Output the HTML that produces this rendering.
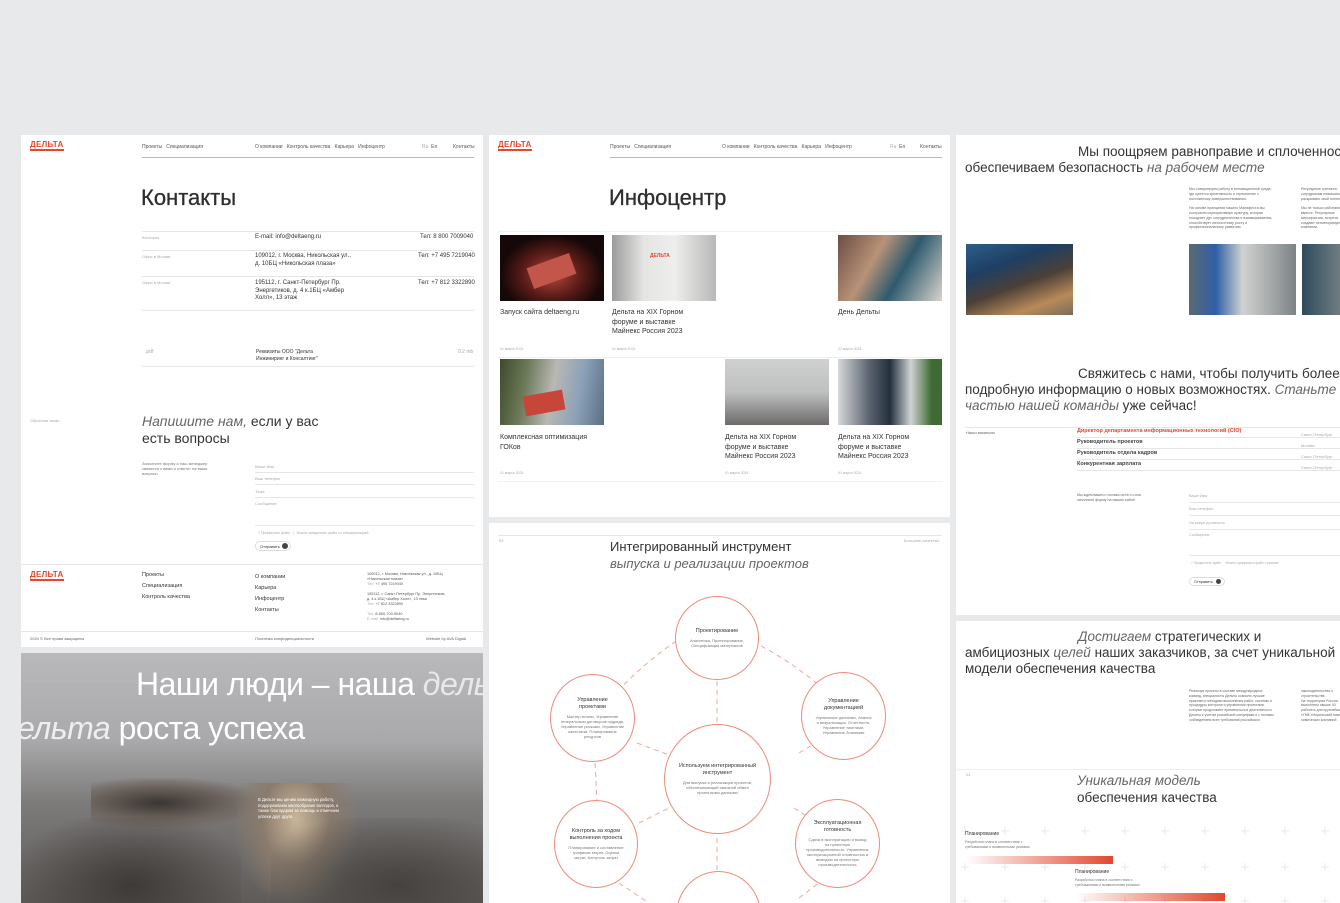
<!DOCTYPE html>
<html><head><meta charset="utf-8">
<style>
*{margin:0;padding:0;box-sizing:border-box}
html,body{width:1340px;height:903px;overflow:hidden}
body{background:#e8e9eb;position:relative;font-family:"Liberation Sans","Noto Sans CJK SC",sans-serif;color:#333}
.p{position:absolute;background:#fff;overflow:hidden}
.a{position:absolute;white-space:nowrap}
.t5{font-size:5px;color:#555}
.g{color:#aaa}
.ln{position:absolute;height:1px;background:#e6e6e6}
.logo{position:absolute;color:#e2472f;font-size:8px;font-weight:bold;letter-spacing:.3px;border-bottom:2px solid #e2472f;line-height:8px}
i{font-style:italic;font-weight:normal;color:#666}
.img{position:absolute}
.circ{position:absolute;border:1px solid #ee8a7b;border-radius:50%;background:#fff;text-align:center;display:flex;flex-direction:column;justify-content:center;align-items:center;padding:6px}
.circ b{font-size:5.5px;font-weight:normal;color:#333;line-height:7px}
.circ span{font-size:4px;color:#777;line-height:5px;margin-top:3px}
</style></head><body>

<!-- LEFT TOP: Контакты -->
<div class="p" style="left:21px;top:135px;width:462px;height:512px">
 <div class="logo" style="left:9px;top:6px">ДЕЛЬТА</div>
 <div class="a t5" style="left:121px;top:9px">Проекты&nbsp;&nbsp; Специализация</div>
 <div class="a t5" style="left:234px;top:9px">О компании&nbsp;&nbsp; Контроль качества&nbsp;&nbsp; Карьера&nbsp;&nbsp; Инфоцентр</div>
 <div class="a t5" style="left:401px;top:9px"><span class="g">Ru</span>&nbsp; En</div>
 <div class="a t5" style="left:432px;top:9px">Контакты</div>
 <div class="ln" style="left:121px;top:22px;width:332px;background:#bbb"></div>
 <div class="a" style="left:120px;top:50px;font-size:22px;color:#2e2e2e;-webkit-text-stroke:0.3px #2e2e2e">Контакты</div>
 <div class="ln" style="left:121px;top:96px;width:332px"></div>
 <div class="a t5 g" style="left:121px;top:100px;font-size:4px">Контакты</div>
 <div class="a" style="left:234px;top:99px;font-size:6px">E-mail: info@deltaeng.ru</div>
 <div class="a" style="left:399px;top:99px;font-size:6px">Тел: 8 800 7009040</div>
 <div class="ln" style="left:121px;top:115px;width:332px"></div>
 <div class="a g" style="left:121px;top:119px;font-size:4px">Офис в Москве</div>
 <div class="a" style="left:234px;top:118px;font-size:6px;line-height:7.5px">109012, г. Москва, Никольская ул.,<br>д. 10БЦ «Никольская плаза»</div>
 <div class="a" style="left:397px;top:118px;font-size:6px">Тел: +7 495 7219040</div>
 <div class="ln" style="left:121px;top:141px;width:332px"></div>
 <div class="a g" style="left:121px;top:145px;font-size:4px">Офис в Москве</div>
 <div class="a" style="left:234px;top:145px;font-size:6px;line-height:7.5px">195112, г. Санкт-Петербург Пр.<br>Энергетиков, д. 4 к.1БЦ «Амбер<br>Холл», 13 этаж</div>
 <div class="a" style="left:397px;top:145px;font-size:6px">Тел: +7 812 3322890</div>
 <div class="ln" style="left:121px;top:175px;width:332px"></div>
 <div class="a g" style="left:124px;top:214px;font-size:5px">.pdf</div>
 <div class="a" style="left:235px;top:214px;font-size:5px;line-height:7px">Реквизиты ООО "Дельта<br>Инжиниринг и Консалтинг"</div>
 <div class="a g" style="left:437px;top:214px;font-size:5px">0.2 mb</div>
 <div class="ln" style="left:121px;top:231px;width:332px"></div>
 <div class="a g" style="left:9px;top:283px;font-size:4px">Обратная связь</div>
 <div class="a" style="left:121px;top:278px;font-size:14px;line-height:17px;color:#333"><i>Напишите нам,</i> если у вас<br>есть вопросы</div>
 <div class="a" style="left:121px;top:326px;font-size:4px;line-height:5px;color:#777">Заполните форму и наш менеджер<br>свяжется с вами и ответит на ваши<br>вопросы</div>
 <div class="a g" style="left:234px;top:329px;font-size:4px">Ваше Имя</div>
 <div class="ln" style="left:234px;top:337px;width:219px"></div>
 <div class="a g" style="left:234px;top:341px;font-size:4px">Ваш телефон</div>
 <div class="ln" style="left:234px;top:349px;width:219px"></div>
 <div class="a g" style="left:234px;top:354px;font-size:4px">Тема</div>
 <div class="ln" style="left:234px;top:362px;width:219px"></div>
 <div class="a g" style="left:234px;top:366px;font-size:4px">Сообщение</div>
 <div class="ln" style="left:234px;top:390px;width:219px"></div>
 <div class="a g" style="left:237px;top:396px;font-size:3.5px">+ Прикрепить файл &nbsp;&nbsp;|&nbsp;&nbsp; Можно прикрепить файл со спецификацией</div>
 <div class="a" style="left:234px;top:406px;width:36px;height:10px;border:1px solid #ddd;border-radius:6px;font-size:4px;padding:2px 4px">Отправить</div>
 <div class="a" style="left:261px;top:408px;width:6px;height:6px;border-radius:50%;background:#444"></div>
 <div class="ln" style="left:0;top:429px;width:462px"></div>
 <div class="logo" style="left:9px;top:436px">ДЕЛЬТА</div>
 <div class="a" style="left:121px;top:435px;font-size:5.5px;line-height:11px">Проекты<br>Специализация<br>Контроль качества</div>
 <div class="a" style="left:234px;top:437px;font-size:5.5px;line-height:11px">О компании<br>Карьера<br>Инфоцентр<br>Контакты</div>
 <div class="a" style="left:346px;top:437px;font-size:3.8px;line-height:5px;color:#555">109012, г. Москва, Никольская ул., д. 10БЦ<br>«Никольская плаза»<br><span class="g">Тел:</span> +7 495 7219040<br><br>195112, г. Санкт-Петербург Пр. Энергетиков,<br>д. 4 к.1БЦ «Амбер Холл», 13 этаж<br><span class="g">Тел:</span> +7 812 3322890<br><br><span class="g">Тел:</span> 8-800-700-9040<br><span class="g">E-mail:</span> info@deltaeng.ru</div>
 <div class="ln" style="left:0;top:496px;width:462px"></div>
 <div class="a" style="left:9px;top:501px;font-size:4px;color:#666">2024 © Все права защищены</div>
 <div class="a" style="left:234px;top:501px;font-size:4px;color:#666">Политика конфиденциальности</div>
 <div class="a" style="left:405px;top:501px;font-size:4px;color:#666">Website by AVA Digital</div>
</div>

<!-- LEFT BOTTOM: photo -->
<div class="p" style="left:21px;top:653px;width:462px;height:250px;background:linear-gradient(180deg,#b9b9bb 0%,#a9a9ab 35%,#7d7b7a 60%,#5e5b59 100%)">
 <div class="img" style="left:70px;top:125px;width:170px;height:50px;background:radial-gradient(ellipse at 40% 50%,#3a3634 0%,#6b625c 45%,rgba(130,125,120,0) 75%)"></div>
 <div class="img" style="left:215px;top:130px;width:120px;height:120px;background:radial-gradient(ellipse at 50% 30%,#c9b59a 0%,#8a7b6c 40%,rgba(100,95,90,0) 75%)"></div>
 <div class="img" style="left:0;top:165px;width:220px;height:85px;background:radial-gradient(ellipse at 50% 80%,#3e3a38,rgba(80,76,72,0) 80%)"></div>
 <div class="img" style="left:250px;top:165px;width:212px;height:85px;background:radial-gradient(ellipse at 60% 80%,#45423f,rgba(80,76,72,0) 80%)"></div>
 <div class="a" style="left:115px;top:13px;font-size:32px;color:#fff;letter-spacing:-.5px">Наши люди – наша <i style="color:#e8e8e8">дельта</i></div>
 <div class="a" style="left:-4px;top:57px;font-size:32px;color:#fff;letter-spacing:-.5px"><i style="color:#eee">ельта</i> роста успеха</div>
 <div class="a" style="left:237px;top:144px;font-size:4.2px;line-height:5.5px;color:#fff">В Дельте мы ценим командную работу,<br>поддерживаем многообразие взглядов, а<br>также благодарим за помощь и отмечаем<br>успехи друг друга.</div>
</div>

<!-- MIDDLE TOP: Инфоцентр -->
<div class="p" style="left:489px;top:135px;width:461px;height:382px">
 <div class="logo" style="left:9px;top:6px">ДЕЛЬТА</div>
 <div class="a t5" style="left:121px;top:9px">Проекты&nbsp;&nbsp; Специализация</div>
 <div class="a t5" style="left:233px;top:9px">О компании&nbsp;&nbsp; Контроль качества&nbsp;&nbsp; Карьера&nbsp;&nbsp; Инфоцентр</div>
 <div class="a t5" style="left:401px;top:9px"><span class="g">Ru</span>&nbsp; En</div>
 <div class="a t5" style="left:431px;top:9px">Контакты</div>
 <div class="ln" style="left:121px;top:22px;width:332px;background:#bbb"></div>
 <div class="a" style="left:120px;top:50px;font-size:22px;color:#2e2e2e;-webkit-text-stroke:0.3px #2e2e2e">Инфоцентр</div>
 <div class="ln" style="left:9px;top:96px;width:444px;background:#f0f0f0"></div>
 <div class="img" style="left:11px;top:100px;width:104px;height:66px;background:radial-gradient(ellipse at 50% 60%,#b8473b 0%,#5a1c18 40%,#160808 70%),#200;"></div>
 <div class="img" style="left:40px;top:125px;width:45px;height:22px;background:#c2564a;transform:rotate(-20deg)"></div>
 <div class="img" style="left:123px;top:100px;width:104px;height:66px;background:linear-gradient(90deg,#9c9c9c 0%,#e4e4e2 30%,#eeeeec 60%,#b8b8b8 100%)"></div>
 <div class="a" style="left:161px;top:118px;font-size:5px;color:#e2472f;font-weight:bold">ДЕЛЬТА</div>
 <div class="img" style="left:349px;top:100px;width:104px;height:66px;background:linear-gradient(120deg,#6b4d42 0%,#b89278 35%,#2e5a6e 60%,#d9d4cc 100%)"></div>
 <div class="a" style="left:11px;top:173px;font-size:7px;line-height:9.5px">Запуск сайта deltaeng.ru</div>
 <div class="a" style="left:123px;top:173px;font-size:7px;line-height:9.5px">Дельта на XIX Горном<br>форуме и выставке<br>Майнекс Россия 2023</div>
 <div class="a" style="left:349px;top:173px;font-size:7px;line-height:9.5px">День Дельты</div>
 <div class="a g" style="left:11px;top:212px;font-size:3.5px">01 марта 2024</div>
 <div class="a g" style="left:123px;top:212px;font-size:3.5px">01 марта 2024</div>
 <div class="a g" style="left:349px;top:212px;font-size:3.5px">01 марта 2024</div>
 <div class="ln" style="left:9px;top:222px;width:444px;background:#f0f0f0"></div>
 <div class="img" style="left:11px;top:224px;width:104px;height:66px;background:linear-gradient(100deg,#3f4a2c 0%,#6b7a58 25%,#b9b8b4 50%,#8aa0b8 75%,#5a6f82 100%)"></div>
 <div class="img" style="left:35px;top:258px;width:40px;height:20px;background:#c8453a;transform:rotate(-10deg)"></div>
 <div class="img" style="left:236px;top:224px;width:104px;height:66px;background:linear-gradient(180deg,#cfd0d0 0%,#bfc0c0 50%,#6d6b6a 100%)"></div>
 <div class="img" style="left:349px;top:224px;width:104px;height:66px;background:linear-gradient(90deg,#d6d8d8 0%,#5b6470 30%,#23303d 50%,#cfd3d4 70%,#3f6a34 90%)"></div>
 <div class="a" style="left:11px;top:298px;font-size:7px;line-height:9.5px">Комплексная оптимизация<br>ГОКов</div>
 <div class="a" style="left:236px;top:298px;font-size:7px;line-height:9.5px">Дельта на XIX Горном<br>форуме и выставке<br>Майнекс Россия 2023</div>
 <div class="a" style="left:349px;top:298px;font-size:7px;line-height:9.5px">Дельта на XIX Горном<br>форуме и выставке<br>Майнекс Россия 2023</div>
 <div class="a g" style="left:11px;top:336px;font-size:3.5px">01 марта 2024</div>
 <div class="a g" style="left:236px;top:336px;font-size:3.5px">01 марта 2024</div>
 <div class="a g" style="left:349px;top:336px;font-size:3.5px">01 марта 2024</div>
 <div class="ln" style="left:9px;top:346px;width:444px;background:#f0f0f0"></div>
</div>

<!-- MIDDLE BOTTOM: diagram -->
<div class="p" style="left:489px;top:523px;width:461px;height:380px">
 <div class="ln" style="left:9px;top:12px;width:444px"></div>
 <div class="a g" style="left:10px;top:15px;font-size:4px">03</div>
 <div class="a g" style="left:415px;top:15px;font-size:4px">Контроль качества</div>
 <div class="a" style="left:121px;top:15px;font-size:13px;line-height:17px">Интегрированный инструмент<br><i>выпуска и реализации проектов</i></div>
 <svg class="a" style="left:0;top:0" width="461" height="380">
  <g stroke="#f0a89c" stroke-width="1" stroke-dasharray="5,4" fill="none">
   <path d="M105 195 Q150 140 200 110"/>
   <path d="M256 115 Q310 140 355 185"/>
   <path d="M228 158 L228 200"/>
   <path d="M148 220 L180 232"/>
   <path d="M310 230 L335 215"/>
   <path d="M106 240 L108 280"/>
   <path d="M150 300 L180 285"/>
   <path d="M305 285 L325 298"/>
   <path d="M228 306 L228 350"/>
   <path d="M130 360 L160 380"/>
   <path d="M310 375 L330 360"/>
  </g>
 </svg>
 <div class="circ" style="left:186px;top:73px;width:84px;height:84px"><b>Проектирование</b><span>Аналитика, Проектирование,<br>Спецификация материалов</span></div>
 <div class="circ" style="left:61px;top:151px;width:85px;height:88px"><b>Управление<br>проектами</b><span>Мастер-планы, Управление<br>генеральным договором подряда,<br>Управление рисками, Управление<br>качеством, Планирование<br>ресурсов</span></div>
 <div class="circ" style="left:312px;top:149px;width:85px;height:88px"><b>Управление<br>документацией</b><span>Управление данными, Анализ<br>и визуализация, Отчетность,<br>Управление тикетами,<br>Управление Знаниями</span></div>
 <div class="circ" style="left:175px;top:201px;width:107px;height:110px"><b>Используем интегрированный<br>инструмент</b><span>Для выпуска и реализации проектов,<br>обеспечивающий сквозной обмен<br>проектными данными</span></div>
 <div class="circ" style="left:65px;top:277px;width:84px;height:88px"><b>Контроль за ходом<br>выполнения проекта</b><span>Планирование и составление<br>графиков затрат, Оценка<br>затрат, Контроль затрат</span></div>
 <div class="circ" style="left:306px;top:276px;width:85px;height:89px"><b>Эксплуатационная<br>готовность</b><span>Сдача в эксплуатацию и вывод<br>на проектную<br>производительность. Управление<br>эксплуатационной готовностью и<br>выводом на проектную<br>производительность</span></div>
 <div class="circ" style="left:187px;top:348px;width:85px;height:88px"></div>
</div>

<!-- RIGHT TOP -->
<div class="p" style="left:956px;top:135px;width:384px;height:480px">
 <div class="a" style="left:122px;top:9px;font-size:13.5px;line-height:16.5px">Мы поощряем равноправие и сплоченность,</div>
 <div class="a" style="left:9px;top:25px;font-size:13.5px;line-height:16.5px">обеспечиваем безопасность <i>на рабочем месте</i></div>
 <div class="a" style="left:233px;top:52px;font-size:3.6px;line-height:4.8px;color:#666">Мы стимулируем работу в инновационной среде,<br>где ценится креативность и стремление к<br>постоянному совершенствованию.<br><br>На основе принципов нашего Манифеста мы<br>построили корпоративную культуру, которая<br>поощряет дух сотрудничества и взаимоуважения,<br>способствует личностному росту и<br>профессиональному развитию.</div>
 <div class="a" style="left:345px;top:52px;font-size:3.6px;line-height:4.8px;color:#666">Регулярные тренинги<br>сотрудникам повышать<br>раскрывать свой потенциал<br><br>Мы не только работаем<br>вместе. Регулярные<br>мероприятия, встречи<br>создают неповторимую<br>компании.</div>
 <div class="img" style="left:10px;top:109px;width:107px;height:71px;background:linear-gradient(160deg,#2d5e8a 0%,#1e3f63 30%,#4b4038 55%,#b98a58 80%,#7a6a5e 100%)"></div>
 <div class="img" style="left:233px;top:109px;width:107px;height:71px;background:linear-gradient(90deg,#5b6a72 0%,#2f5fa8 25%,#cfd2d0 50%,#b0b3b3 70%,#7c8386 100%)"></div>
 <div class="img" style="left:346px;top:109px;width:38px;height:71px;background:linear-gradient(90deg,#2e4a5c,#6f7d82)"></div>
 <div class="a" style="left:122px;top:231px;font-size:13.5px;line-height:16.5px">Свяжитесь с нами, чтобы получить более</div>
 <div class="a" style="left:9px;top:247px;font-size:13.5px;line-height:16.5px">подробную информацию о новых возможностях. <i>Станьте</i></div>
 <div class="a" style="left:9px;top:263px;font-size:13.5px;line-height:16.5px"><i>частью нашей команды</i> уже сейчас!</div>
 <div class="ln" style="left:9px;top:292px;width:375px"></div>
 <div class="a" style="left:10px;top:295px;font-size:4px;color:#666">Наши вакансии</div>
 <div class="a" style="left:121px;top:293px;font-size:5.5px;color:#e2472f;font-weight:bold">Директор департамента информационных технологий (CIO)</div>
 <div class="ln" style="left:121px;top:302px;width:263px"></div>
 <div class="a" style="left:121px;top:304px;font-size:5.5px;font-weight:bold;color:#444">Руководитель проектов</div>
 <div class="ln" style="left:121px;top:313px;width:263px"></div>
 <div class="a" style="left:121px;top:315px;font-size:5.5px;font-weight:bold;color:#444">Руководитель отдела кадров</div>
 <div class="ln" style="left:121px;top:324px;width:263px"></div>
 <div class="a" style="left:121px;top:326px;font-size:5.5px;font-weight:bold;color:#444">Конкурентная зарплата</div>
 <div class="ln" style="left:121px;top:335px;width:263px"></div>
 <div class="a g" style="left:345px;top:294px;font-size:4px;line-height:11px">Санкт-Петербург<br>Москва<br>Санкт-Петербург<br>Санкт-Петербург</div>
 <div class="a" style="left:121px;top:358px;font-size:3.6px;line-height:4.8px;color:#666">Мы ждем вашего отклика на hh.ru или<br>заполните форму на нашем сайте!</div>
 <div class="a g" style="left:233px;top:359px;font-size:3.8px">Ваше Имя</div>
 <div class="ln" style="left:233px;top:367px;width:151px"></div>
 <div class="a g" style="left:233px;top:372px;font-size:3.8px">Ваш телефон</div>
 <div class="ln" style="left:233px;top:380px;width:151px"></div>
 <div class="a g" style="left:233px;top:386px;font-size:3.8px">На какую должность</div>
 <div class="ln" style="left:233px;top:394px;width:151px"></div>
 <div class="a g" style="left:233px;top:398px;font-size:3.8px">Сообщение</div>
 <div class="ln" style="left:233px;top:420px;width:151px"></div>
 <div class="a g" style="left:235px;top:426px;font-size:3.3px">+ Прикрепить файл &nbsp;&nbsp;&nbsp; Можно прикрепить файл с резюме</div>
 <div class="a" style="left:233px;top:442px;width:36px;height:9px;border:1px solid #ddd;border-radius:6px;font-size:3.8px;padding:2px 4px">Отправить</div>
 <div class="a" style="left:260px;top:444px;width:5px;height:5px;border-radius:50%;background:#444"></div>
</div>

<!-- RIGHT BOTTOM -->
<div class="p" style="left:956px;top:621px;width:384px;height:282px">
 <div class="a" style="left:122px;top:8px;font-size:13.5px;line-height:16.5px"><i>Достигаем</i> стратегических и</div>
 <div class="a" style="left:9px;top:24px;font-size:13.5px;line-height:16.5px">амбициозных <i>целей</i> наших заказчиков, за счет уникальной</div>
 <div class="a" style="left:9px;top:40px;font-size:13.5px;line-height:16.5px">модели обеспечения качества</div>
 <div class="a" style="left:233px;top:68px;font-size:3.5px;line-height:4.8px;color:#666">Реализуя проекты в составе международных<br>команд, специалисты Дельты освоили лучшие<br>практики и методики выполнения работ, системы и<br>процедуры контроля и управления проектами,<br>которые продолжают применяться в деятельности<br>Дельты с учетом российской специфики и с полным<br>соблюдением всех требований российского</div>
 <div class="a" style="left:345px;top:68px;font-size:3.5px;line-height:4.8px;color:#666">законодательства о<br>строительстве.<br>На территории России<br>выполнено свыше 40<br>работать для крупнейших<br>«ГМК «Норильский никель»<br>химических компаний</div>
 <div class="ln" style="left:0;top:148px;width:384px;background:#eee"></div>
 <div class="a g" style="left:10px;top:151px;font-size:4px">04</div>
 <div class="a" style="left:121px;top:151px;font-size:13.5px;line-height:17px"><i>Уникальная модель</i><br>обеспечения качества</div>
 <svg class="a" style="left:0;top:200px" width="384" height="82">
  <g stroke="#e4e4e4" stroke-width="0.8">
   <path d="M5 10h8M9 6v8M45 10h8M49 6v8M85 10h8M89 6v8M125 10h8M129 6v8M165 10h8M169 6v8M205 10h8M209 6v8M245 10h8M249 6v8M285 10h8M289 6v8M325 10h8M329 6v8M365 10h8M369 6v8"/>
   <path d="M5 46h8M9 42v8M45 46h8M49 42v8M85 46h8M89 42v8M125 46h8M129 42v8M165 46h8M169 42v8M205 46h8M209 42v8M245 46h8M249 42v8M285 46h8M289 42v8M325 46h8M329 42v8M365 46h8M369 42v8"/>
   <path d="M5 80h8M9 76v8M45 80h8M49 76v8M85 80h8M89 76v8M125 80h8M129 76v8M165 80h8M169 76v8M205 80h8M209 76v8M245 80h8M249 76v8M285 80h8M289 76v8M325 80h8M329 76v8M365 80h8M369 76v8"/>
  </g>
 </svg>
 <div class="a" style="left:9px;top:210px;font-size:5px;color:#333">Планирование</div>
 <div class="a" style="left:9px;top:219px;font-size:3.5px;line-height:4.5px;color:#777">Разработка плана в соответствии с<br>требованиями и выявленными рисками</div>
 <div class="img" style="left:9px;top:235px;width:148px;height:8px;background:linear-gradient(90deg,rgba(230,70,45,0),#e2472f)"></div>
 <div class="a" style="left:119px;top:248px;font-size:5px;color:#333">Планирование</div>
 <div class="a" style="left:119px;top:257px;font-size:3.5px;line-height:4.5px;color:#777">Разработка плана в соответствии с<br>требованиями и выявленными рисками</div>
 <div class="img" style="left:119px;top:272px;width:150px;height:8px;background:linear-gradient(90deg,rgba(230,70,45,0),#e2472f)"></div>
</div>

</body></html>
